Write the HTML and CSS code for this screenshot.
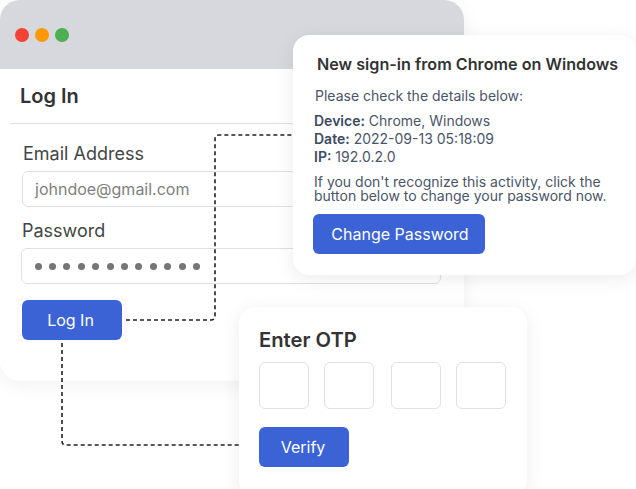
FILE: index.html
```html
<!DOCTYPE html>
<html lang="en">
<head>
<meta charset="utf-8">
<title>Log In</title>
<link rel="stylesheet" href="styles.css">
</head>
<body>
<main class="canvas">
  <section class="window">
    <header class="window-bar">
      <span class="light light-red"></span>
      <span class="light light-orange"></span>
      <span class="light light-green"></span>
    </header>
    <h1 class="window-title">Log In</h1>
    <form class="login-form">
      <div class="label label-email">Email Address</div>
      <div class="field field-email">johndoe@gmail.com</div>
      <div class="label label-password">Password</div>
      <div class="field field-password">
        <span class="dot"></span><span class="dot"></span><span class="dot"></span><span class="dot"></span>
        <span class="dot"></span><span class="dot"></span><span class="dot"></span><span class="dot"></span>
        <span class="dot"></span><span class="dot"></span><span class="dot"></span><span class="dot"></span>
      </div>
      <div class="button button-login">Log In</div>
    </form>
  </section>

  <svg class="connectors" width="636" height="489" viewBox="0 0 636 489" fill="none">
    <path d="M126 320H211Q215 320 215 316V139Q215 135 219 135H293"/>
    <path d="M62 343V441Q62 445 66 445H239"/>
  </svg>

  <section class="card card-notice">
    <h2 class="notice-title">New sign-in from Chrome on Windows</h2>
    <p class="notice-intro">Please check the details below:</p>
    <ul class="notice-details">
      <li><b>Device:</b> Chrome, Windows</li>
      <li><b>Date:</b> 2022-09-13 05:18:09</li>
      <li><b>IP:</b> 192.0.2.0</li>
    </ul>
    <p class="notice-text">If you don't recognize this activity, click the button below to change your password now.</p>
    <div class="button button-change">Change Password</div>
  </section>

  <section class="card card-otp">
    <h2 class="otp-title">Enter OTP</h2>
    <div class="otp-boxes">
      <span class="otp-box"></span>
      <span class="otp-box"></span>
      <span class="otp-box otp-box-third"></span>
      <span class="otp-box"></span>
    </div>
    <div class="button button-verify">Verify</div>
  </section>
</main>
</body>
</html>
```

FILE: styles.css
```css
* { box-sizing: border-box; margin: 0; padding: 0; }

html, body { background: #fff; overflow: hidden; }

body { font-family: Inter, "Liberation Sans", sans-serif; }

.canvas {
  position: relative;
  width: 636px;
  height: 489px;
  overflow: hidden;
}

.window {
  position: absolute;
  left: 0;
  top: 0;
  width: 464px;
  height: 381px;
  background: #fff;
  border-radius: 20px;
  box-shadow: 0 4px 20px rgba(0, 0, 0, 0.06);
  overflow: hidden;
}

.window-bar {
  display: flex;
  align-items: center;
  gap: 6px;
  height: 69px;
  padding-left: 15px;
  background: #d6d8dd;
}

.light { width: 14px; height: 14px; border-radius: 50%; }
.light-red { background: #f44336; }
.light-orange { background: #ff9800; }
.light-green { background: #4caf50; }

.window-title {
  margin: 0 0 0 10px;
  padding: 14px 0 13px 10px;
  height: 55px;
  border-bottom: 1px solid #e0e0e0;
  font-size: 20px;
  line-height: 27px;
  font-weight: 600;
  color: #333;
}

.login-form {
  display: flex;
  flex-direction: column;
  padding: 18px 23px 0 22px;
}

.label {
  font-size: 18px;
  line-height: 24px;
  color: #444;
}

.label-email { margin-left: 1px; }
.label-password { margin-top: 12px; }

.field {
  display: flex;
  align-items: center;
  height: 36px;
  margin-top: 5px;
  background: #fff;
  border: 1px solid #e0e0e0;
  border-radius: 6px;
  padding-left: 12px;
  font-size: 16px;
  color: #808080;
}

.field-password { margin-left: -1px; padding-left: 12.500px; gap: 7.420px; }

.dot { width: 7px; height: 7px; border-radius: 50%; background: #757575; }

.button {
  display: flex;
  align-items: center;
  justify-content: center;
  height: 40px;
  background: #3b63d6;
  border-radius: 6px;
  color: #fff;
  font-size: 16px;
}

.button-login { width: 100px; margin-top: 16px; padding-right: 3px; }
.button-change { width: 172px; margin-top: 11px; margin-left: 20px; padding-left: 2px; }
.button-verify { width: 90px; margin-top: 18px; padding-right: 2px; }

.connectors {
  position: absolute;
  left: 0;
  top: 0;
}

.connectors path {
  stroke: #222;
  stroke-width: 1.600px;
  stroke-dasharray: 4 3;
}

.card {
  position: absolute;
  background: #fff;
  border-radius: 16px;
  box-shadow: 0 4px 20px rgba(0, 0, 0, 0.08);
}

.card-notice {
  left: 293px;
  top: 35px;
  width: 343px;
  height: 240px;
}

.notice-title {
  margin: 19px 0 0 24px;
  font-size: 16.160px;
  line-height: 20px;
  font-weight: 600;
  color: #333;
}

.notice-intro {
  margin: 13px 0 0 22px;
  font-size: 14px;
  line-height: 18px;
  color: #4a5568;
}

.notice-details {
  list-style: none;
  margin: 7px 0 0 21px;
  font-size: 14px;
  line-height: 18px;
  color: #4a5568;
}

.notice-details b { font-weight: 600; color: #3d4a5f; }

.notice-text {
  margin: 9px 10px 0 21px;
  font-size: 14px;
  line-height: 14px;
  color: #4a5568;
}

.card-otp {
  left: 239px;
  top: 307px;
  width: 288px;
  height: 190px;
  padding: 18px 21px 0 20px;
}

.otp-title {
  font-size: 20.200px;
  line-height: 27px;
  padding-top: 1px;
  font-weight: 600;
  color: #333;
}

.otp-boxes {
  display: flex;
  gap: 15px;
  margin-top: 9px;
}

.otp-box {
  width: 50px;
  height: 47px;
  border: 1px solid #e0e0e0;
  border-radius: 6px;
}

.otp-box-third { margin-left: 2px; }
```
